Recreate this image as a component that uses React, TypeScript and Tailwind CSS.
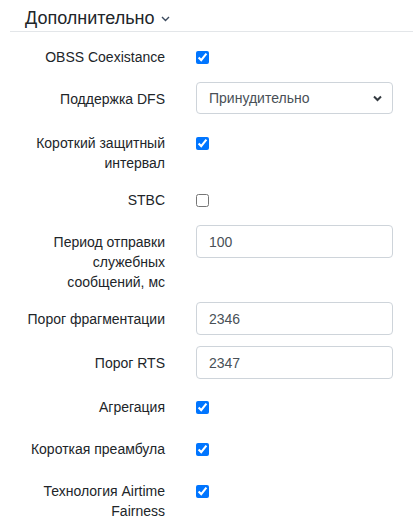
import React from 'react';

type Row =
  | { kind: 'check'; label: string[]; checked: boolean; h: string }
  | { kind: 'input'; label: string[]; value: string; h: string }
  | { kind: 'select'; label: string[]; value: string; h: string };

const rows: Row[] = [
  { kind: 'check', label: ['OBSS Coexistance'], checked: true, h: 'h-[42px]' },
  { kind: 'select', label: ['Поддержка DFS'], value: 'Принудительно', h: 'h-[44px]' },
  { kind: 'check', label: ['Короткий защитный', 'интервал'], checked: true, h: 'h-[57px]' },
  { kind: 'check', label: ['STBC'], checked: false, h: 'h-[42px]' },
  { kind: 'input', label: ['Период отправки', 'служебных', 'сообщений, мс'], value: '100', h: 'h-[77px]' },
  { kind: 'input', label: ['Порог фрагментации'], value: '2346', h: 'h-[44px]' },
  { kind: 'input', label: ['Порог RTS'], value: '2347', h: 'h-[44px]' },
  { kind: 'check', label: ['Агрегация'], checked: true, h: 'h-[42px]' },
  { kind: 'check', label: ['Короткая преамбула'], checked: true, h: 'h-[42px]' },
  { kind: 'check', label: ['Технология Airtime', 'Fairness'], checked: true, h: 'h-[57px]' },
];

function Control({ row }: { row: Row }) {
  if (row.kind === 'check') {
    return (
      <div className="pt-[11px]">
        <input type="checkbox" defaultChecked={row.checked} className="block w-[13px] h-[13px] m-0" />
      </div>
    );
  }
  if (row.kind === 'select') {
    return (
      <div className="relative w-[197px] h-[32px]">
        <select
          defaultValue={row.value}
          className="w-full h-full appearance-none bg-white border border-[#ced4da] rounded-[4px] pl-[12px] pr-8 text-[14px] text-[#495057] outline-none"
        >
          <option>Принудительно</option>
          <option>Включено</option>
          <option>Выключено</option>
        </select>
        <svg className="absolute right-[11px] top-[13px] pointer-events-none" width="9" height="7" viewBox="0 0 9 7">
          <path d="M1 1.5 L4.5 5 L8 1.5" fill="none" stroke="#343a40" strokeWidth="2" />
        </svg>
      </div>
    );
  }
  return (
    <input
      type="text"
      defaultValue={row.value}
      className="block w-[197px] h-[33px] border border-[#ced4da] rounded-[4px] pl-[12px] text-[14px] text-[#495057] outline-none"
    />
  );
}

export default function App() {
  return (
    <div className="w-[413px] h-[525px] bg-white overflow-hidden font-['Liberation_Sans',Arial,sans-serif]">
      <div className="ml-[10px] border-b border-[#e3e6e9]">
        <div className="pl-[15px] pt-[6px] pb-[1px] flex items-center h-[31px] text-[18px] leading-[24px] text-[#212529]">
          <span>Дополнительно</span>
          <svg className="ml-[6px] mt-[2px]" width="9" height="6" viewBox="0 0 9 6">
            <path d="M1 1 L4.5 4.5 L8 1" fill="none" stroke="#3b4a5e" strokeWidth="1.4" />
          </svg>
        </div>
      </div>
      <div className="pt-[8px]">
        {rows.map((row, i) => (
          <div key={i} className={`flex items-start ${row.h}`}>
            <div className="w-[165px] pl-[10px] pt-[7px] text-right text-[14px] leading-[20px] text-[#212529]">
              {row.label.map((l, j) => (
                <div key={j}>{l}</div>
              ))}
            </div>
            <div className="ml-[31px]">
              <Control row={row} />
            </div>
          </div>
        ))}
      </div>
    </div>
  );
}
